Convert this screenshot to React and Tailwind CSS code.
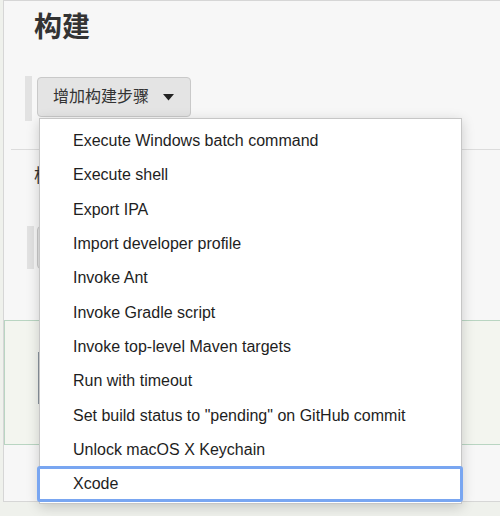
import React from "react";

const steps = [
  "Execute Windows batch command",
  "Execute shell",
  "Export IPA",
  "Import developer profile",
  "Invoke Ant",
  "Invoke Gradle script",
  "Invoke top-level Maven targets",
  "Run with timeout",
  'Set build status to "pending" on GitHub commit',
  "Unlock macOS X Keychain",
  "Xcode",
];

const FONT = { fontFamily: '"Liberation Sans", "Noto Sans CJK SC", sans-serif' };

const App = () => {
  return (
    <div className="relative w-[500px] h-[516px] overflow-hidden bg-[#eff1ec]" style={FONT}>
      {/* page section */}
      <div className="ml-[3px] h-[502px] border-l border-t border-b border-[#d6d6d6] bg-[#f7f7f7] flex flex-col">
        <h2 className="ml-[30px] mt-[7px] text-[28px] leading-[40px] font-semibold text-[#333]">构建</h2>

        {/* add step button */}
        <div className="mt-[28px] ml-[21px] flex items-start">
          <div className="w-[7px] h-[45px] bg-[#e2e2e2]" />
          <button className="ml-[5px] mt-[1px] h-[40px] w-[154px] flex items-center gap-[14px] pl-[15px] rounded-[4px] border border-[#c9c9c9] bg-[#e4e4e4] text-[16px] text-[#333]">
            <span>增加构建步骤</span>
            <svg width="11" height="7" viewBox="0 0 11 7">
              <path d="M0 0H11L5.5 6.5Z" fill="#222" />
            </svg>
          </button>
        </div>

        <div className="mt-[28px] ml-[7px] border-t border-[#dcdcdc]" />

        <div className="mt-[14px] ml-[30px] text-[18px] leading-[24px] text-[#333]">构建后操作</div>

        <div className="mt-[38px] ml-[23px] flex items-start">
          <div className="w-[7px] h-[43px] bg-[#e2e2e2]" />
          <div className="ml-[3px] h-[43px] w-[120px] rounded-[4px] border border-[#c9c9c9] bg-[#e4e4e4]" />
        </div>

        {/* saved panel */}
        <div className="mt-[51px] h-[125px] border-t border-b border-l border-[#b9d5c2] bg-[#f3f5ef] pt-[31px] pl-[33px]">
          <div className="w-[2px] h-[52px] bg-[#8b959e]" />
        </div>
      </div>

      {/* dropdown menu */}
      <div className="absolute left-[39px] top-[118px] w-[423px] h-[386px] bg-white border border-[#c6c6c6] shadow-[0_3px_12px_rgba(0,0,0,0.18)] pt-[5px]">
        {steps.map((s, i) => (
          <div
            key={s}
            className="relative h-[34.3px] flex items-center pl-[33px] text-[16px] text-[#1e1e1e] whitespace-nowrap"
          >
            {s}
            {i === steps.length - 1 && (
              <span className="absolute -left-[3px] -right-[2px] top-[-1px] bottom-[-1px] border-[3px] border-[#79a6f1] rounded-[3px]" />
            )}
          </div>
        ))}
      </div>
    </div>
  );
};

export default App;
